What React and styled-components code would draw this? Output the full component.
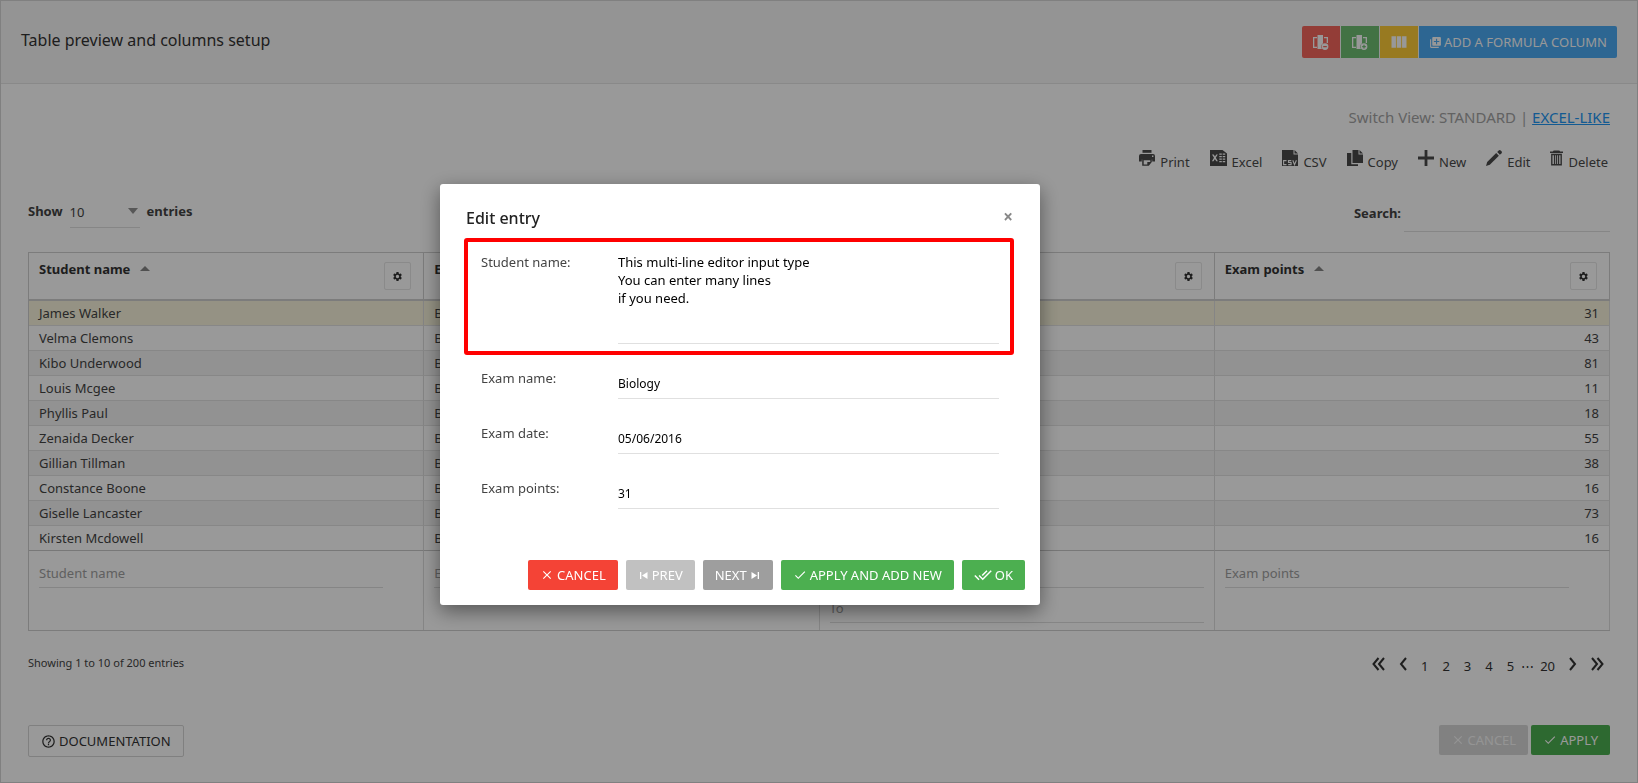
import React from "react";
import styled, { createGlobalStyle } from "styled-components";
import {
  MdCheck,
  MdClose,
  MdDoneAll,
  MdHelpOutline,
  MdLibraryAdd,
  MdSettings,
  MdViewColumn,
} from "react-icons/md";

const columns = [
  { id: "student", title: "Student name" },
  { id: "exam", title: "Exam name" },
  { id: "date", title: "Exam date", range: true },
  { id: "points", title: "Exam points" },
];

const students = [
  { name: "James Walker", points: 31 },
  { name: "Velma Clemons", points: 43 },
  { name: "Kibo Underwood", points: 81 },
  { name: "Louis Mcgee", points: 11 },
  { name: "Phyllis Paul", points: 18 },
  { name: "Zenaida Decker", points: 55 },
  { name: "Gillian Tillman", points: 38 },
  { name: "Constance Boone", points: 16 },
  { name: "Giselle Lancaster", points: 73 },
  { name: "Kirsten Mcdowell", points: 16 },
];

const ColumnIcon = ({ plus }) => (
  <svg width="17" height="17" viewBox="0 0 17 17" fill="currentColor">
    <path d="M1 3h4v1.3H2.3v8.4H5V14H1z" />
    <path d="M12 3h4v6h-1.3V4.300H12z" />
    <path d="M5.500 1h5.500v8.200a4 4 0 0 0-1 5.800H5.500z" />
    <path
      fillRule="evenodd"
      d="M13 9.200a3.400 3.400 0 1 1 0 6.800a3.400 3.400 0 0 1 0-6.800zM11.200 12.100v1.200h3.600v-1.200z"
    />
    {plus && <path d="M12.400 10.800h1.200v3.600h-1.200z" fill="#4caf50" />}
  </svg>
);

const PrintIcon = () => (
  <svg width="16" height="16" viewBox="0 0 16 16" fill="currentColor">
    <path d="M3.500 0h9v2.800h-9z" />
    <path
      fillRule="evenodd"
      d="M2 4h12a2 2 0 0 1 2 2v5.500h-2.800V9.500H2.800v2H0V6a2 2 0 0 1 2-2zM13 5.500v1.400h1.400V5.500z"
    />
    <path
      fillRule="evenodd"
      d="M3.200 9h9.600v3l-3 3.800H3.200zM4.700 10.300v4.200h3.600v-2.500h3V10.300z"
    />
  </svg>
);

const ExcelIcon = () => (
  <svg width="17" height="16" viewBox="0 0 17 16" fill="currentColor">
    <path
      fillRule="evenodd"
      d="M0 0h12.500L17 3.500V16H0zM2 4.500l2 3.300-2.100 3.400h1.600l1.400-2.300 1.300 2.300h1.700L5.800 7.800l2-3.300H6.200L5 6.600 3.700 4.500zM9.300 3.500v1.300h2.500V3.500zm3.400 0v1.300h2.500V3.500zM9.300 6v1.300h2.500V6zm3.400 0v1.300h2.500V6zM9.300 8.500v1.300h2.500V8.500zm3.400 0v1.300h2.500V8.500zM9.300 11v1.300h2.500V11zm3.400 0v1.300h2.500V11z"
    />
  </svg>
);

const CsvIcon = () => (
  <svg width="16" height="16" viewBox="0 0 16 16" fill="none">
    <path d="M0 0h11.500v4.500H16V16H0z" fill="currentColor" />
    <path d="M12.500 0L16 3.500h-3.500z" fill="currentColor" />
    <path
      d="M4.500 10.600H1.600v4h2.900M9.300 10.600H6.500v1.900h2.600v2.100H6.200M10.800 10.200l1.700 4.500 1.900-4.500"
      stroke="#fff"
      strokeWidth="1.100"
    />
  </svg>
);

const CopyIcon = () => (
  <svg width="16" height="16" viewBox="0 0 16 16" fill="currentColor">
    <path d="M5.500 0h6v4.500H16V13H5.500z" />
    <path d="M12.500 0L16 3.500h-3.500z" />
    <path d="M0 3h4.300v11.300H11V16H0z" />
  </svg>
);

const PlusIcon = () => (
  <svg width="16" height="16" viewBox="0 0 16 16" fill="currentColor">
    <path d="M6.600 0h2.800v6.600H16v2.800H9.400V16H6.600V9.400H0V6.600h6.600z" />
  </svg>
);

const EditIcon = () => (
  <svg width="16" height="16" viewBox="0 0 16 16" fill="currentColor">
    <path d="M10.200 3l2.700 2.700L3.800 14.800 0 16l1.200-4z" />
    <path d="M11.200 2l1.500-1.500a1.500 1.500 0 0 1 2 0l.8.8a1.500 1.500 0 0 1 0 2L13.900 4.700z" />
  </svg>
);

const TrashIcon = () => (
  <svg width="13" height="16" viewBox="0 0 14 16" fill="currentColor">
    <path d="M4 0h6l1 1h3v1.500H0V1h3z" />
    <path
      fillRule="evenodd"
      d="M1.200 3.500h11.600V16H1.200zM2.700 5v9.500h1.500V5zm2.900 0v9.500h.9V5zm2 0v9.500h.9V5zm2.300 0v9.500h1.400V5z"
    />
  </svg>
);

const PrevIcon = () => (
  <svg width="11" height="9" viewBox="0 0 11 9" fill="currentColor">
    <path d="M2 1h1.300v7H2zM9.500 1v7L4 4.500z" />
  </svg>
);

const NextIcon = () => (
  <svg width="11" height="9" viewBox="0 0 11 9" fill="currentColor">
    <path d="M7.700 1H9v7H7.700zM1.500 1v7L7 4.500z" />
  </svg>
);

const Chevron = ({ double, right }) => (
  <svg
    width={double ? 13 : 8}
    height="14"
    viewBox={double ? "0 0 13 14" : "0 0 8 14"}
    fill="none"
    stroke="currentColor"
    strokeWidth="2"
  >
    {right ? (
      <path d={double ? "M1 1l5 6-5 6M6.500 1l5 6-5 6" : "M1 1l5 6-5 6"} />
    ) : (
      <path d={double ? "M6.500 1l-5 6 5 6M12 1L7 7l5 6" : "M7 1L2 7l5 6"} />
    )}
  </svg>
);

const tools = [
  { label: "Print", icon: <PrintIcon /> },
  { label: "Excel", icon: <ExcelIcon /> },
  { label: "CSV", icon: <CsvIcon /> },
  { label: "Copy", icon: <CopyIcon /> },
  { label: "New", icon: <PlusIcon /> },
  { label: "Edit", icon: <EditIcon /> },
  { label: "Delete", icon: <TrashIcon /> },
];

const App = () => {
  return (
    <>
      <GlobalStyle />
      <Page>
        <Header>
          <h1>Table preview and columns setup</h1>
          <ButtonGroup>
            <HeaderButton $color="#f44336" aria-label="Hide column">
              <ColumnIcon />
            </HeaderButton>
            <HeaderButton $color="#4caf50" aria-label="Show column">
              <ColumnIcon plus />
            </HeaderButton>
            <HeaderButton $color="#ffc107" aria-label="Column list">
              <MdViewColumn size={20} />
            </HeaderButton>
            <HeaderButton $color="#2196f3">
              <MdLibraryAdd size={13} />
              ADD A FORMULA COLUMN
            </HeaderButton>
          </ButtonGroup>
        </Header>

        <Content>
          <SwitchView>
            Switch View: STANDARD | <a href="#excel">EXCEL-LIKE</a>
          </SwitchView>
          <Toolbar>
            {tools.map((tool) => (
              <ToolButton key={tool.label}>
                {tool.icon}
                <span>{tool.label}</span>
              </ToolButton>
            ))}
          </Toolbar>

          <Filters>
            <Length>
              <label htmlFor="length">Show</label>
              <div className="select">
                <select id="length" defaultValue="10">
                  <option>10</option>
                  <option>25</option>
                  <option>50</option>
                </select>
              </div>
              <b>entries</b>
            </Length>
            <Search>
              <label htmlFor="search">Search:</label>
              <input id="search" type="text" />
            </Search>
          </Filters>

          <Table>
            <thead>
              <tr>
                {columns.map((col) => (
                  <th key={col.id}>
                    <HeadCell>
                      <span>
                        {col.title}
                        <SortArrow />
                      </span>
                      <button aria-label={`${col.title} settings`}>
                        <MdSettings size={11} />
                      </button>
                    </HeadCell>
                  </th>
                ))}
              </tr>
            </thead>
            <tbody>
              {students.map((student, i) => (
                <Row key={student.name} $selected={i === 0}>
                  <td>{student.name}</td>
                  <td>Biology</td>
                  <td>05/06/2016</td>
                  <td className="number">{student.points}</td>
                </Row>
              ))}
            </tbody>
            <tfoot>
              <tr>
                {columns.map((col) => (
                  <td key={col.id}>
                    <FilterInput
                      $wide={col.range}
                      aria-label={`Filter ${col.title}`}
                      placeholder={col.range ? "From" : col.title}
                    />
                    {col.range && (
                      <FilterInput $wide aria-label="Filter to" placeholder="To" />
                    )}
                  </td>
                ))}
              </tr>
            </tfoot>
          </Table>

          <TableFooter>
            <p>Showing 1 to 10 of 200 entries</p>
            <Pagination>
              <ArrowButton aria-label="First">
                <Chevron double />
              </ArrowButton>
              <ArrowButton aria-label="Previous">
                <Chevron />
              </ArrowButton>
              {[1, 2, 3, 4, 5].map((n) => (
                <PageNumber key={n}>{n}</PageNumber>
              ))}
              <Dots>⋯</Dots>
              <PageNumber>20</PageNumber>
              <ArrowButton aria-label="Next">
                <Chevron right />
              </ArrowButton>
              <ArrowButton aria-label="Last">
                <Chevron double right />
              </ArrowButton>
            </Pagination>
          </TableFooter>

          <Actions>
            <DocButton>
              <MdHelpOutline size={15} />
              DOCUMENTATION
            </DocButton>
            <div>
              <Button $color="#d8d8d8" $text="#f7f7f7">
                <MdClose size={14} />
                CANCEL
              </Button>
              <Button $color="#4caf50">
                <MdCheck size={14} />
                APPLY
              </Button>
            </div>
          </Actions>
        </Content>
      </Page>

      <Overlay>
        <Modal role="dialog" aria-labelledby="modal-title">
          <ModalHeader>
            <h2 id="modal-title">Edit entry</h2>
            <button aria-label="Close">×</button>
          </ModalHeader>
          <Field $highlighted>
            <label htmlFor="student-name">Student name:</label>
            <textarea
              id="student-name"
              defaultValue={
                "This multi-line editor input type\nYou can enter many lines\nif you need."
              }
            />
          </Field>
          <Field>
            <label htmlFor="exam-name">Exam name:</label>
            <input id="exam-name" defaultValue="Biology" />
          </Field>
          <Field>
            <label htmlFor="exam-date">Exam date:</label>
            <input id="exam-date" defaultValue="05/06/2016" />
          </Field>
          <Field>
            <label htmlFor="exam-points">Exam points:</label>
            <input id="exam-points" defaultValue="31" />
          </Field>
          <ModalFooter>
            <Button $color="#f44336">
              <MdClose size={14} />
              CANCEL
            </Button>
            <Button $color="#c1c1c1">
              <PrevIcon />
              PREV
            </Button>
            <Button $color="#9e9e9e">
              NEXT
              <NextIcon />
            </Button>
            <Button $color="#4caf50">
              <MdCheck size={14} />
              APPLY AND ADD NEW
            </Button>
            <Button $color="#4caf50">
              <MdDoneAll size={18} />
              OK
            </Button>
          </ModalFooter>
        </Modal>
      </Overlay>
    </>
  );
};

export default App;

const GlobalStyle = createGlobalStyle`
  * {
    box-sizing: border-box;
  }
  body {
    margin: 0;
    color: #444;
    font-family: "Noto Sans", "Open Sans", sans-serif;
    font-size: 13px;
    line-height: 18px;
  }
  h1, h2, p {
    margin: 0;
  }
  button, input, select, textarea {
    font: inherit;
    color: inherit;
    margin: 0;
    padding: 0;
    border: none;
    border-radius: 0;
    background: none;
    outline: none;
  }
  svg {
    flex-shrink: 0;
  }
`;

const Page = styled.div`
  min-height: 100vh;
  border: 1px solid #d6d6d6;
  background-color: #fff;
`;

const Header = styled.header`
  display: flex;
  justify-content: space-between;
  align-items: flex-start;
  height: 83px;
  padding: 25px 20px 0;
  background-color: #f7f7f7;
  border-bottom: 1px solid #e4e4e4;
  h1 {
    font-size: 16px;
    font-weight: normal;
    line-height: 28px;
    color: #333;
  }
`;

const ButtonGroup = styled.div`
  display: flex;
  gap: 1px;
  border-radius: 2px;
  overflow: hidden;
`;

const HeaderButton = styled.button`
  display: flex;
  align-items: center;
  gap: 2px;
  min-width: 38px;
  height: 32px;
  padding: 0 9px;
  justify-content: center;
  color: #fff;
  background-color: ${({ $color }) => $color};
  opacity: 0.8;
  &:last-child {
    padding: 0 10px;
  }
`;

const Content = styled.main`
  padding: 24px 27px;
`;

const SwitchView = styled.div`
  font-size: 15px;
  line-height: 18px;
  color: #a3a3a3;
  text-align: right;
  a {
    color: #2196f3;
  }
`;

const Toolbar = styled.div`
  display: flex;
  justify-content: flex-end;
  gap: 20px;
  margin-top: 24px;
  padding-right: 2px;
`;

const ToolButton = styled.button`
  display: flex;
  align-items: flex-start;
  gap: 5px;
  height: 24px;
  color: #4a4a4a;
  span {
    padding-top: 3px;
  }
`;

const Filters = styled.div`
  display: flex;
  justify-content: space-between;
  height: 78px;
  padding-top: 28px;
  label,
  b {
    font-weight: bold;
  }
`;

const Length = styled.div`
  display: flex;
  gap: 7px;
  .select {
    position: relative;
    width: 70px;
    height: 26px;
    border-bottom: 1px solid #e0e0e0;
    &::after {
      content: "";
      position: absolute;
      right: 2px;
      top: 6px;
      border: 5px solid transparent;
      border-top: 6px solid #919191;
      border-bottom: none;
    }
  }
  select {
    appearance: none;
    width: 100%;
    padding-top: 1px;
  }
`;

const Search = styled.div`
  display: flex;
  gap: 3px;
  padding-top: 2px;
  input {
    width: 206px;
    height: 28px;
    border-bottom: 1px solid #e0e0e0;
  }
`;

const Table = styled.table`
  width: 100%;
  table-layout: fixed;
  border-collapse: separate;
  border-spacing: 0;
  border: 1px solid #cfcfcf;
  border-right: none;
  th,
  td {
    text-align: left;
    vertical-align: top;
    padding: 0 10px;
    border-right: 1px solid #dedede;
  }
  th {
    border-color: #cfcfcf;
    border-bottom: 2px solid #cfcfcf;
    height: 48px;
    color: #333;
  }
  tfoot td {
    height: 80px;
    border-top: 1px solid #c8c8c8;
    padding-top: 9px;
  }
`;

const HeadCell = styled.div`
  display: flex;
  justify-content: space-between;
  padding: 7px 1px 0 0;
  button {
    display: flex;
    align-items: center;
    justify-content: center;
    width: 27px;
    height: 28px;
    margin: 2px 1px 0;
    border: 1px solid #e6e6e6;
    border-radius: 2px;
  }
`;

const SortArrow = styled.i`
  display: inline-block;
  margin-left: 10px;
  vertical-align: 3px;
  border: 5px solid transparent;
  border-bottom: 5px solid #858585;
  border-top: none;
`;

const Row = styled.tr`
  background-color: #fff;
  &:nth-child(odd) {
    background-color: ${({ $selected }) => ($selected ? "#f8f4dc" : "#f3f3f3")};
  }
  td {
    height: 25px;
    line-height: 24px;
    border-bottom: 1px solid #e2e2e2;
  }
  &:last-child td {
    height: 24px;
    border-bottom: none;
  }
  .number {
    text-align: right;
  }
`;

const FilterInput = styled.input`
  display: block;
  width: ${({ $wide }) => ($wide ? "100%" : "calc(100% - 30px)")};
  height: 28px;
  padding-bottom: 1px;
  border-bottom: 1px solid #dedede;
  & + & {
    margin-top: 7px;
  }
  &::placeholder {
    color: #a0a0a0;
    opacity: 1;
  }
`;

const TableFooter = styled.div`
  display: flex;
  justify-content: space-between;
  align-items: flex-start;
  padding: 23px 6px 0 0;
  p {
    font-size: 11px;
  }
`;

const Pagination = styled.nav`
  display: flex;
  align-items: center;
  gap: 14px;
  height: 24px;
  color: #333;
`;

const ArrowButton = styled.button`
  display: flex;
  padding-bottom: 4px;
`;

const PageNumber = styled.button`
  text-align: center;
`;

const Dots = styled.span`
  width: 12px;
  margin: 0 -7px;
  text-align: center;
`;

const Actions = styled.div`
  display: flex;
  justify-content: space-between;
  align-items: flex-start;
  margin-top: 47px;
  div {
    display: flex;
    gap: 3px;
  }
`;

const Button = styled.button`
  display: flex;
  align-items: center;
  gap: 3px;
  height: 30px;
  padding: 0 12px;
  border-radius: 2px;
  color: ${({ $text }) => $text || "#fff"};
  background-color: ${({ $color }) => $color};
`;

const DocButton = styled(Button)`
  height: 32px;
  color: #333;
  border: 1px solid #d6d6d6;
`;

const Overlay = styled.div`
  position: fixed;
  inset: 0;
  display: flex;
  justify-content: center;
  align-items: flex-start;
  padding: 184px 158px 0 0;
  background-color: rgba(0, 0, 0, 0.4);
`;

const Modal = styled.div`
  width: 600px;
  padding: 24px 15px 15px 24px;
  background-color: #fff;
  border-radius: 3px;
  box-shadow: 0 6px 20px rgba(0, 0, 0, 0.45);
`;

const ModalHeader = styled.div`
  display: flex;
  justify-content: space-between;
  align-items: flex-start;
  padding: 0 12px 10px 2px;
  h2 {
    font-size: 16px;
    font-weight: 500;
    line-height: 20px;
    color: #222;
  }
  button {
    font-size: 17px;
    font-weight: bold;
    color: #888;
  }
`;

const Field = styled.div`
  display: flex;
  width: 550px;
  height: ${({ $highlighted }) => ($highlighted ? "117px" : "55px")};
  padding: ${({ $highlighted }) => ($highlighted ? "11px" : "14px")} 11px 0 13px;
  border: 4px solid ${({ $highlighted }) => ($highlighted ? "#f00" : "transparent")};
  border-width: ${({ $highlighted }) => ($highlighted ? "4px" : "0 4px")};
  border-radius: 3px;
  label {
    width: 137px;
  }
  input,
  textarea {
    flex: 1;
    color: #000;
    resize: none;
    border-bottom: 1px solid #e0e0e0;
  }
  textarea {
    height: 91px;
    overflow: hidden;
  }
  input {
    height: 30px;
    font-size: 12px;
  }
`;

const ModalFooter = styled.div`
  display: flex;
  justify-content: flex-end;
  gap: 8px;
  padding-top: 40px;
`;
